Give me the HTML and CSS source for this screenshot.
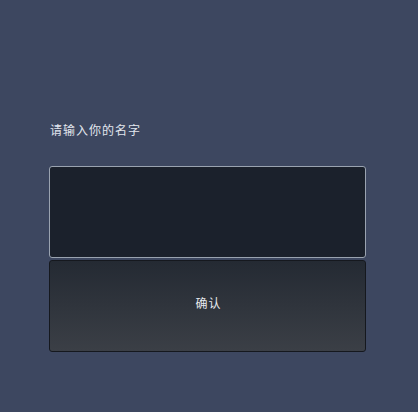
FILE: index.html
```html
<!DOCTYPE html>
<html lang="zh">
<head>
<meta charset="utf-8">
<link rel="stylesheet" href="styles.css">
</head>
<body>
<div class="page">
  <div class="form">
    <label class="label" for="name">请输入你的名字</label>
    <input class="input" id="name" type="text">
    <button class="btn" type="button">确认</button>
  </div>
</div>
</body>
</html>
```
FILE: styles.css
```css
html, body {
  margin: 0;
  padding: 0;
  background: #3d4760;
  width: 418px;
  height: 412px;
  overflow: hidden;
}
.page {
  padding: 121px 52px 0 49px;
}
.form {
  display: flex;
  flex-direction: column;
}
.label {
  font-family: "Noto Sans CJK SC", "Noto Sans", sans-serif;
  font-size: 12px;
  line-height: 18px;
  color: #e2e6ee;
  letter-spacing: 1px;
  padding-left: 1px;
  margin-bottom: 27px;
}
.input {
  box-sizing: border-box;
  height: 92px;
  width: 317px;
  margin: 0;
  background: #1b212c;
  border: 1px solid #9aa3b0;
  border-radius: 3px;
  outline: none;
  color: #e2e6ee;
}
.btn {
  box-sizing: border-box;
  margin-top: 2px;
  height: 92px;
  width: 317px;
  background: linear-gradient(#242a33, #3b3f46);
  border: 1px solid #15181e;
  border-radius: 3px;
  color: #e8ebf0;
  font-family: "Noto Sans CJK SC", "Noto Sans", sans-serif;
  font-size: 12px;
  letter-spacing: 1px;
  padding: 0 0 8px 2px;
}
```
